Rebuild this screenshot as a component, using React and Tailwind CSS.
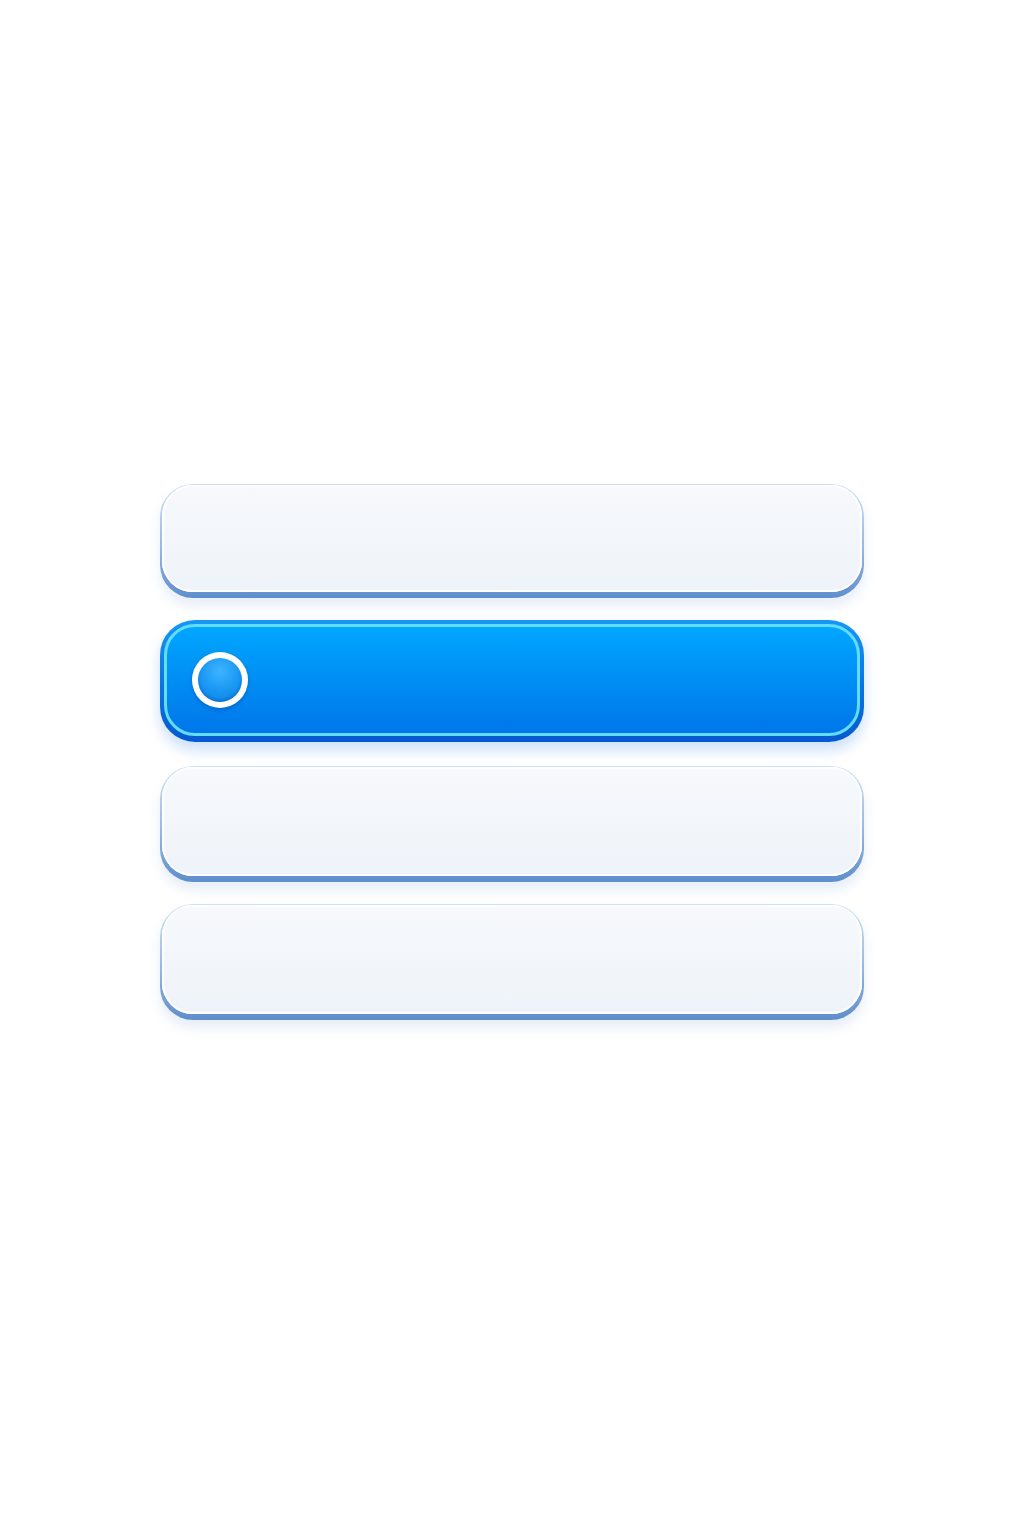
import React from "react";

function PlainRow() {
  return (
    <div className="h-full rounded-[33px] bg-gradient-to-b from-[#cfe1f5] via-[#9dbde4] to-[#5f8ecd] px-[2px] pt-[1px] pb-[6px] shadow-[0_8px_12px_rgba(120,160,210,0.18)]">
      <div className="h-full rounded-[31px] bg-gradient-to-b from-[#f7f9fc] to-[#eef3f9] shadow-[inset_0_-2px_0_#ffffff,inset_2px_0_0_rgba(255,255,255,0.85),inset_-2px_0_0_rgba(255,255,255,0.85),inset_0_2px_0_rgba(255,255,255,0.7)]" />
    </div>
  );
}

function SelectedRow() {
  return (
    <div className="h-full rounded-[35px] bg-gradient-to-b from-[#1697f6] to-[#0759d0] px-[4px] pt-[4px] pb-[6px] shadow-[0_8px_14px_rgba(20,110,220,0.22)]">
      <div className="flex h-full items-center rounded-[31px] border-[3px] border-[#62dcff] bg-gradient-to-b from-[#02a6ff] to-[#0076e9] pl-[25px]">
        <div className="flex h-[56px] w-[56px] items-center justify-center rounded-full bg-white shadow-[0_2px_4px_rgba(0,60,150,0.35)]">
          <div className="h-[44px] w-[44px] rounded-full bg-[radial-gradient(circle_at_50%_30%,#3db4ff_0%,#1896f2_55%,#0a7ee0_100%)] shadow-[inset_0_-2px_3px_rgba(0,70,170,0.35)]" />
        </div>
      </div>
    </div>
  );
}

export default function App() {
  return (
    <div className="min-h-[1536px] w-full bg-white pt-[484px]">
      <div className="mx-auto flex w-[704px] flex-col">
        <div className="h-[114px]">
          <PlainRow />
        </div>
        <div className="mt-[22px] h-[122px]">
          <SelectedRow />
        </div>
        <div className="mt-[24px] h-[116px]">
          <PlainRow />
        </div>
        <div className="mt-[22px] h-[116px]">
          <PlainRow />
        </div>
      </div>
    </div>
  );
}
